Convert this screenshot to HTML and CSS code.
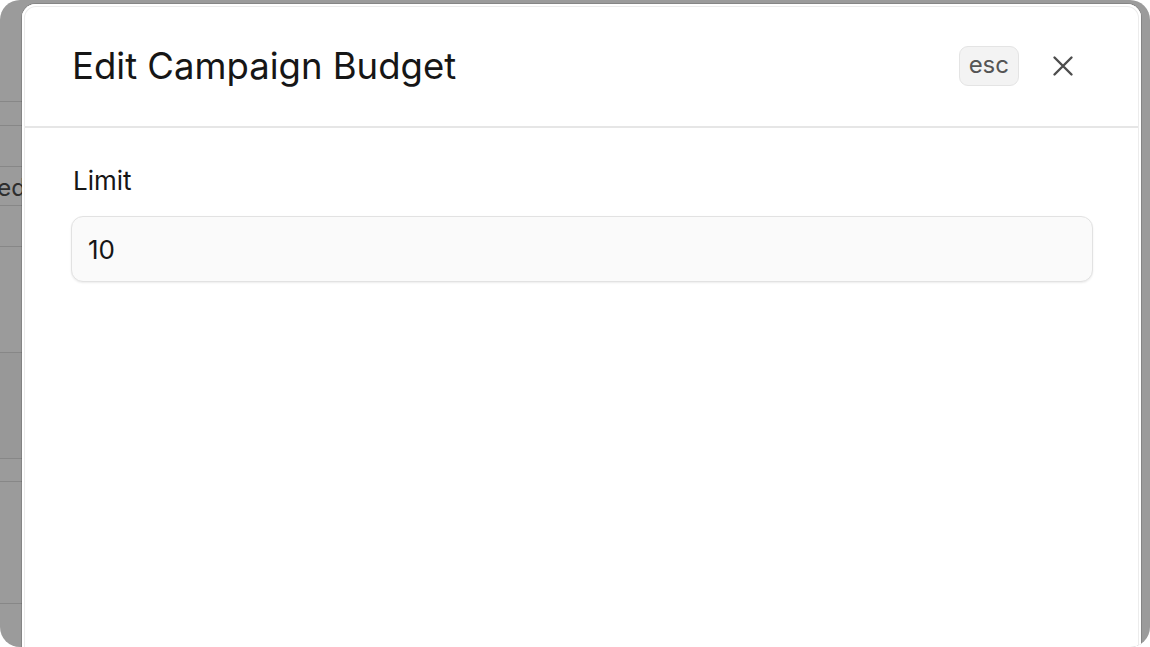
FILE: index.html
```html
<!DOCTYPE html>
<html lang="en">
<head>
<meta charset="utf-8">
<title>Edit Campaign Budget</title>
<link rel="stylesheet" href="styles.css">
</head>
<body>
<div class="frame">
  <div class="backdrop">
    <div class="row r1"></div>
    <div class="row r2"></div>
    <div class="row r3"></div>
    <div class="row r4"><span class="cell">Completed</span></div>
    <div class="row r5"></div>
    <div class="row r6"></div>
    <div class="row r7"></div>
    <div class="row r8"></div>
    <div class="row r9"></div>
  </div>
  <div class="modal" role="dialog" aria-label="Edit Campaign Budget">
    <div class="modal-header">
      <h1 class="title">Edit Campaign Budget</h1>
      <div class="actions">
        <span class="kbd">esc</span>
        <button class="close" aria-label="Close">
          <svg width="22" height="22" viewBox="0 0 22 22" fill="none" stroke="#4d4d4d" stroke-width="2.4" stroke-linecap="round"><path d="M2.5 2.5 L19.5 19.5 M19.5 2.5 L2.5 19.5"/></svg>
        </button>
      </div>
    </div>
    <div class="modal-body">
      <label class="label" for="limit">Limit</label>
      <input class="input" id="limit" type="text" value="10">
    </div>
  </div>
</div>
</body>
</html>
```
FILE: styles.css
```css
* { box-sizing: border-box; }
html, body { margin: 0; padding: 0; background: #ffffff; }
body { font-family: Inter, "Noto Sans", sans-serif; }

.frame {
  position: relative;
  width: 1150px;
  height: 647px;
  border-radius: 20px;
  overflow: hidden;
  background: #9b9b9b;
}

.backdrop { display: flex; flex-direction: column; }
.row { border-bottom: 1px solid #878787; display: flex; align-items: center; justify-content: flex-end; width: 26px; }
.r1 { height: 102px; }
.r2 { height: 24px; }
.r3 { height: 41px; }
.r4 { height: 39px; }
.r5 { height: 41px; }
.r6 { height: 106px; }
.r7 { height: 106px; background: #989898; }
.r8 { height: 23px; }
.r9 { height: 122px; }
.cell { font-size: 24px; color: #2e2e2e; white-space: nowrap; padding-top: 2px; }

.modal {
  position: absolute;
  left: 22px;
  top: 4px;
  width: 1119px;
  height: 680px;
  background: #fff;
  border-radius: 14px;
  box-shadow: 0 0 0 1px rgba(0,0,0,0.14), inset 0 0 0 2px #fff, inset 0 0 0 3px #ececec;
}

.modal-header {
  height: 124px;
  border-bottom: 2px solid #e6e6e6;
  margin: 0 3px;
  display: flex;
  align-items: center;
  justify-content: space-between;
  padding: 2px 55px 0 47px;
}
.title {
  margin: 0;
  font-size: 36.5px;
  font-weight: 400;
  color: #161616;
  letter-spacing: 0;
}
.actions { display: flex; align-items: center; gap: 24px; }
.kbd {
  display: inline-flex;
  align-items: center;
  justify-content: center;
  height: 40px;
  padding: 0 9px 3px;
  font-size: 24px;
  color: #555;
  background: #f3f3f3;
  border: 1px solid #e4e4e4;
  border-radius: 9px;
}
.close {
  width: 40px; height: 40px;
  display: flex; align-items: center; justify-content: center;
  background: none; border: 0; padding: 0;
}

.modal-body {
  padding: 37px 48px 0 49px;
  display: flex;
  flex-direction: column;
}
.label {
  font-size: 26px;
  font-weight: 400;
  color: #161616;
  line-height: 31px;
  margin-left: 2px;
}
.input {
  margin-top: 20px;
  height: 66px;
  width: 100%;
  border: 1px solid #e2e2e2;
  border-radius: 12px;
  background: #fafafa;
  box-shadow: 0 1px 2px rgba(0,0,0,0.08);
  font-family: inherit;
  font-size: 26px;
  color: #161616;
  padding: 0 16px;
  outline: none;
}
```
